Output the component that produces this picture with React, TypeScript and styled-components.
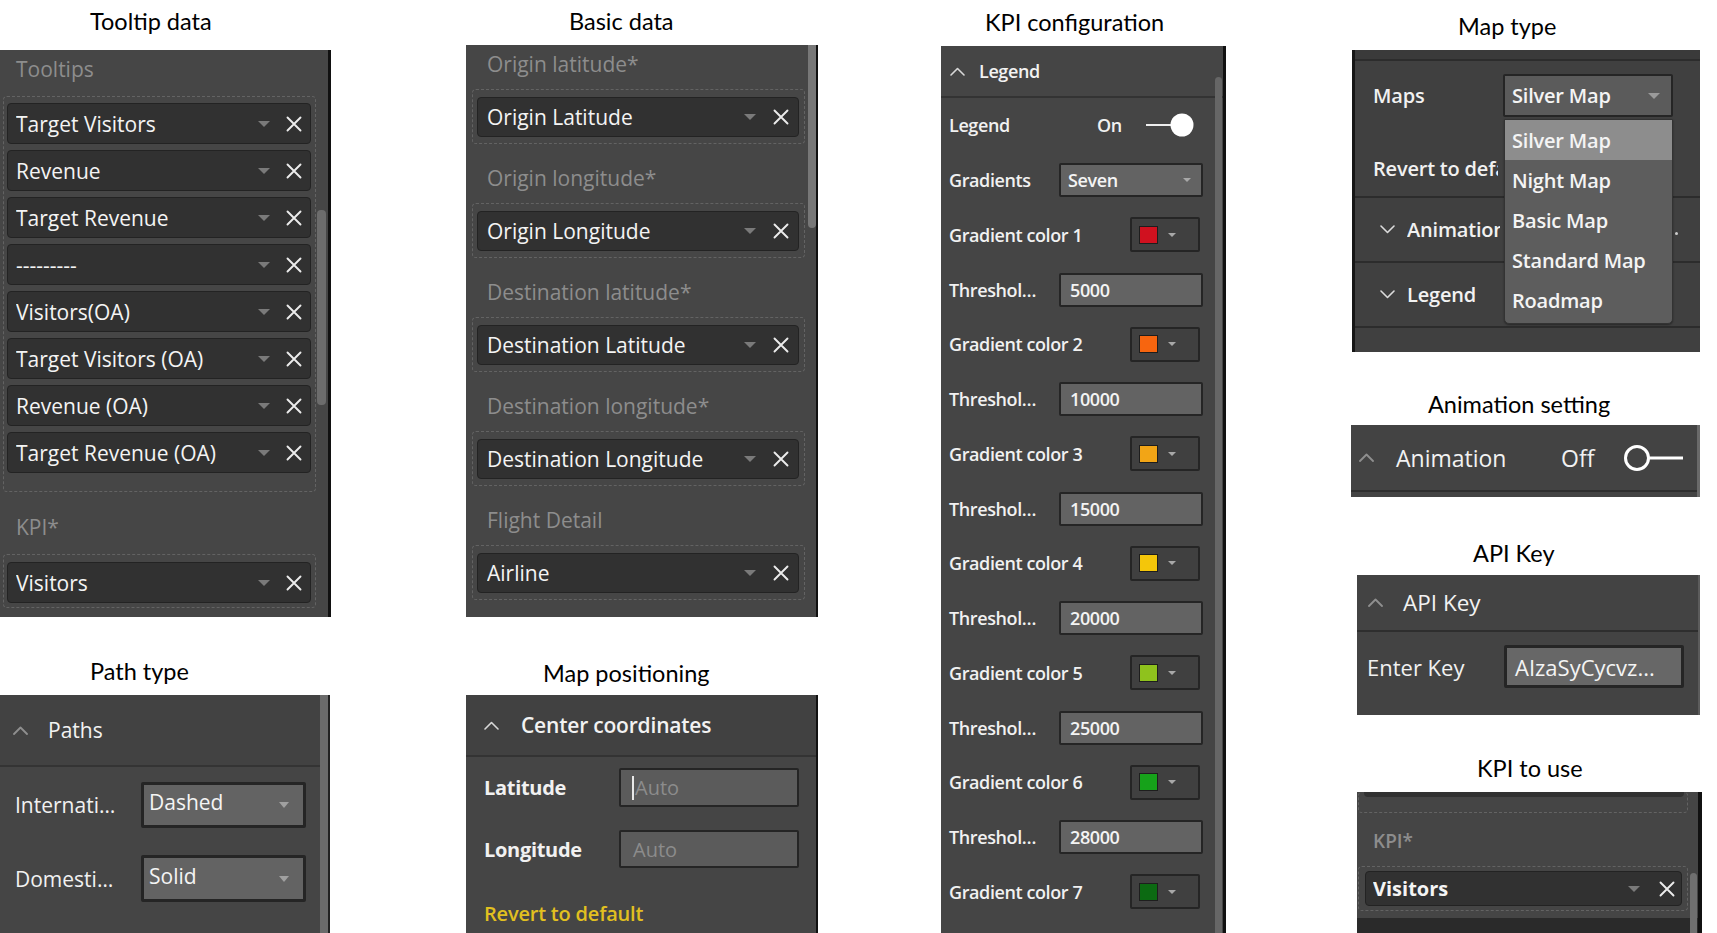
import React from "react";
import styled, { createGlobalStyle } from "styled-components";

const Global = createGlobalStyle`
  html, body { margin: 0; padding: 0; background: #fff; overflow: hidden; }
  body { font-family: "Open Sans", "Noto Sans", sans-serif; }
  * { box-sizing: border-box; }
`;

const Page = styled.div`
  display: flex;
  align-items: flex-start;
  width: 1717px;
  height: 933px;
  overflow: hidden;
  background: #fff;
`;

const Column = styled.div<{ $w: number; $ml: number }>`
  display: flex;
  flex-direction: column;
  flex: 0 0 ${(p) => p.$w}px;
  margin-left: ${(p) => p.$ml}px;
`;

const Figure = styled.section<{ $mt: number }>`
  display: flex;
  flex-direction: column;
  margin-top: ${(p) => p.$mt}px;
`;

const Caption = styled.div<{ $pl: number; $gap: number }>`
  font-family: Lato, "Liberation Sans", sans-serif;
  font-size: 23.5px;
  line-height: 28px;
  color: #000;
  padding-left: ${(p) => p.$pl}px;
  margin-bottom: ${(p) => p.$gap}px;
  white-space: nowrap;
`;

const Panel = styled.div<{
  $w: number;
  $h: number;
  $ml?: number;
  $bg?: string;
  $br?: string;
  $bl?: string;
}>`
  position: relative;
  overflow: hidden;
  display: flex;
  flex-direction: column;
  width: ${(p) => p.$w}px;
  height: ${(p) => p.$h}px;
  margin-left: ${(p) => p.$ml ?? 0}px;
  background: ${(p) => p.$bg ?? "#464646"};
  border-right: ${(p) => p.$br ?? "none"};
  border-left: ${(p) => p.$bl ?? "none"};
  color: #f0f0f0;
`;

const ScrollThumb = styled.div<{
  $left: number;
  $top: number;
  $h?: number;
  $w?: number;
  $c?: string;
  $radius?: string;
}>`
  position: absolute;
  left: ${(p) => p.$left}px;
  top: ${(p) => p.$top}px;
  width: ${(p) => p.$w ?? 8}px;
  ${(p) => (p.$h ? `height: ${p.$h}px;` : "bottom: 0;")}
  background: ${(p) => p.$c ?? "#6f6f6f"};
  border-radius: ${(p) => p.$radius ?? "4px"};
`;

/* ---------- field wells ---------- */

const FieldLabel = styled.div<{ $pl: number; $mt?: number; $fs?: number; $weight?: number }>`
  padding-left: ${(p) => p.$pl}px;
  margin-top: ${(p) => p.$mt ?? 0}px;
  font-size: ${(p) => p.$fs ?? 21}px;
  font-weight: ${(p) => p.$weight ?? 400};
  line-height: 28px;
  color: #8d8d8d;
  white-space: nowrap;
`;

const Well = styled.div<{
  $ml: number;
  $w: number;
  $mt: number;
  $pad: string;
  $gap?: number;
  $noTop?: boolean;
}>`
  display: flex;
  flex-direction: column;
  gap: ${(p) => p.$gap ?? 6}px;
  margin-left: ${(p) => p.$ml}px;
  margin-top: ${(p) => p.$mt}px;
  width: ${(p) => p.$w}px;
  padding: ${(p) => p.$pad};
  border: 1px dashed #636363;
  ${(p) => (p.$noTop ? "border-top: none;" : "")}
  border-radius: 4px;
`;

const Pill = styled.div<{ $h: number; $pl: number; $pr: number; $fs: number; $weight?: number; $gap: number }>`
  display: flex;
  align-items: center;
  height: ${(p) => p.$h}px;
  padding-left: ${(p) => p.$pl}px;
  padding-right: ${(p) => p.$pr}px;
  gap: ${(p) => p.$gap}px;
  background: #313131;
  border: 1px solid #232323;
  border-radius: 4px;
  color: #f4f4f4;
  font-size: ${(p) => p.$fs}px;
  font-weight: ${(p) => p.$weight ?? 400};
  white-space: nowrap;
`;

const PillText = styled.span`
  flex: 1;
  overflow: hidden;
`;

const PillStub = styled.div`
  width: 320px;
  height: 5px;
  background: #313131;
  border-radius: 0 0 4px 4px;
`;

const Caret = ({ w = 12, h = 6, c = "#7a7a7a" }: { w?: number; h?: number; c?: string }) => (
  <svg width={w} height={h} viewBox={`0 0 ${w} ${h}`} style={{ flex: "none" }}>
    <polygon points={`0,0 ${w},0 ${w / 2},${h}`} fill={c} />
  </svg>
);

const CloseX = ({ s = 16 }: { s?: number }) => (
  <svg width={s} height={s} viewBox="0 0 16 16" style={{ flex: "none" }}>
    <path d="M1.5 1.5 L14.5 14.5 M14.5 1.5 L1.5 14.5" stroke="#ececec" strokeWidth="1.9" strokeLinecap="round" />
  </svg>
);

const Chevron = ({ dir, c, sw = 1.6 }: { dir: "up" | "down"; c: string; sw?: number }) => (
  <svg width={15} height={9} viewBox="0 0 15 9" style={{ flex: "none" }}>
    <polyline
      points={dir === "up" ? "1,8 7.5,1.5 14,8" : "1,1 7.5,7.5 14,1"}
      fill="none"
      stroke={c}
      strokeWidth={sw}
      strokeLinejoin="round"
      strokeLinecap="round"
    />
  </svg>
);

const FieldPill = ({
  text,
  h,
  pl,
  pr,
  fs,
  gap,
  weight,
}: {
  text: string;
  h: number;
  pl: number;
  pr: number;
  fs: number;
  gap: number;
  weight?: number;
}) => (
  <Pill $h={h} $pl={pl} $pr={pr} $fs={fs} $gap={gap} $weight={weight}>
    <PillText>{text}</PillText>
    <Caret />
    <CloseX />
  </Pill>
);

/* ---------- format pane parts ---------- */

const SectionHeader = styled.div<{ $h: number; $pl: number; $gap: number; $line?: string; $bg?: string }>`
  display: flex;
  align-items: center;
  flex: none;
  height: ${(p) => p.$h}px;
  padding-left: ${(p) => p.$pl}px;
  gap: ${(p) => p.$gap}px;
  border-bottom: 2px solid ${(p) => p.$line ?? "#2f2f2f"};
  background: ${(p) => p.$bg ?? "transparent"};
`;

const HeaderText = styled.span<{ $fs: number; $weight?: number; $w?: number }>`
  font-size: ${(p) => p.$fs}px;
  font-weight: ${(p) => p.$weight ?? 400};
  color: #f2f2f2;
  white-space: nowrap;
  ${(p) => (p.$w ? `flex: 0 0 ${p.$w}px;` : "")}
`;

const FormRow = styled.div<{ $h: number; $mt?: number; $pl: number }>`
  display: flex;
  align-items: center;
  flex: none;
  height: ${(p) => p.$h}px;
  margin-top: ${(p) => p.$mt ?? 0}px;
  padding-left: ${(p) => p.$pl}px;
`;

const FormLabel = styled.span<{ $w: number; $fs: number; $weight?: number; $ls?: number }>`
  flex: 0 0 ${(p) => p.$w}px;
  font-size: ${(p) => p.$fs}px;
  font-weight: ${(p) => p.$weight ?? 400};
  letter-spacing: ${(p) => p.$ls ?? 0}px;
  color: #f1f1f1;
  white-space: nowrap;
`;

const Box = styled.div<{
  $w: number;
  $h: number;
  $bw: number;
  $bg: string;
  $pl: number;
  $pr?: number;
  $fs: number;
  $weight?: number;
  $ml?: number;
  $color?: string;
}>`
  display: flex;
  align-items: center;
  flex: none;
  width: ${(p) => p.$w}px;
  height: ${(p) => p.$h}px;
  margin-left: ${(p) => p.$ml ?? 0}px;
  padding-left: ${(p) => p.$pl}px;
  padding-right: ${(p) => p.$pr ?? 0}px;
  background: ${(p) => p.$bg};
  border: ${(p) => p.$bw}px solid #252525;
  border-radius: 2px;
  font-size: ${(p) => p.$fs}px;
  font-weight: ${(p) => p.$weight ?? 400};
  color: ${(p) => p.$color ?? "#f4f4f4"};
  white-space: nowrap;
`;

const BoxText = styled.span`
  flex: 1;
`;

/* ---------- Panel 1: Tooltip data ---------- */

const tooltipFields = [
  "Target Visitors",
  "Revenue",
  "Target Revenue",
  "---------",
  "Visitors(OA)",
  "Target Visitors (OA)",
  "Revenue (OA)",
  "Target Revenue (OA)",
];

const TooltipPanel = () => (
  <Panel $w={331} $h={567} $br="3px solid #111">
    <FieldLabel $pl={16} $mt={5}>Tooltips</FieldLabel>
    <Well $ml={3} $w={313} $mt={13} $pad="6px 4px 18px 3px">
      {tooltipFields.map((f) => (
        <FieldPill key={f} text={f} h={41} pl={8} pr={8} fs={21} gap={16} />
      ))}
    </Well>
    <FieldLabel $pl={16} $mt={21}>KPI*</FieldLabel>
    <Well $ml={3} $w={313} $mt={13} $pad="7px 4px 4px 3px">
      <FieldPill text="Visitors" h={41} pl={8} pr={8} fs={21} gap={16} />
    </Well>
    <ScrollThumb $left={317} $top={160} $h={195} $w={9} $c="#6c6c6c" />
  </Panel>
);

/* ---------- Panel 2: Basic data ---------- */

const basicSections = [
  ["Origin latitude*", "Origin Latitude"],
  ["Origin longitude*", "Origin Longitude"],
  ["Destination latitude*", "Destination Latitude"],
  ["Destination longitude*", "Destination Longitude"],
  ["Flight Detail", "Airline"],
];

const Section = styled.div<{ $mb: number; $mt?: number }>`
  display: flex;
  flex-direction: column;
  margin-top: ${(p) => p.$mt ?? 0}px;
  margin-bottom: ${(p) => p.$mb}px;
`;

const BasicPanel = () => (
  <Panel $w={352} $h={572} $br="2px solid #111">
    {basicSections.map(([label, value], i) => (
      <Section key={label} $mt={i === 0 ? 5 : 0} $mb={i < basicSections.length - 1 ? 20 : 0}>
        <FieldLabel $pl={21}>{label}</FieldLabel>
        <Well $ml={6} $w={333} $mt={11} $pad="7px 5px 6px 4px">
          <FieldPill text={value} h={40} pl={9} pr={9} fs={21} gap={17} />
        </Well>
      </Section>
    ))}
    <ScrollThumb $left={342} $top={0} $h={183} $w={8} $c="#777" $radius="0 0 4px 4px" />
  </Panel>
);

/* ---------- Panel 3: KPI configuration ---------- */

type KpiRow =
  | { kind: "toggle"; label: string }
  | { kind: "select"; label: string; value: string }
  | { kind: "color"; label: string; color: string }
  | { kind: "input"; label: string; value: string };

const kpiRows: KpiRow[] = [
  { kind: "toggle", label: "Legend" },
  { kind: "select", label: "Gradients", value: "Seven" },
  { kind: "color", label: "Gradient color 1", color: "#d0111f" },
  { kind: "input", label: "Threshol…", value: "5000" },
  { kind: "color", label: "Gradient color 2", color: "#f7650f" },
  { kind: "input", label: "Threshol…", value: "10000" },
  { kind: "color", label: "Gradient color 3", color: "#f2a516" },
  { kind: "input", label: "Threshol…", value: "15000" },
  { kind: "color", label: "Gradient color 4", color: "#f4c60a" },
  { kind: "input", label: "Threshol…", value: "20000" },
  { kind: "color", label: "Gradient color 5", color: "#8fc21d" },
  { kind: "input", label: "Threshol…", value: "25000" },
  { kind: "color", label: "Gradient color 6", color: "#16a21a" },
  { kind: "input", label: "Threshol…", value: "28000" },
  { kind: "color", label: "Gradient color 7", color: "#0c6a12" },
];

const labelWidth: Record<KpiRow["kind"], number> = {
  toggle: 148,
  select: 110,
  input: 110,
  color: 181,
};

const Swatch = styled.span<{ $c: string }>`
  flex: none;
  width: 19px;
  height: 18px;
  background: ${(p) => p.$c};
  border: 1px solid #1e1e1e;
  margin-right: 10px;
`;

const OnText = styled.span`
  font-size: 18px;
  font-weight: 600;
  letter-spacing: -0.3px;
  color: #f1f1f1;
`;

const KpiRowView = ({ row }: { row: KpiRow }) => (
  <FormRow $h={54.75} $pl={8}>
    <FormLabel $w={labelWidth[row.kind]} $fs={18} $weight={600} $ls={-0.4}>
      {row.label}
    </FormLabel>
    {row.kind === "toggle" && (
      <>
        <OnText>On</OnText>
        <svg width={48} height={24} viewBox="0 0 48 24" style={{ marginLeft: 24 }}>
          <line x1="0" y1="12" x2="28" y2="12" stroke="#eee" strokeWidth="2" />
          <circle cx="36" cy="12" r="11.5" fill="#fff" />
        </svg>
      </>
    )}
    {row.kind === "select" && (
      <Box $w={144} $h={34} $bw={2} $bg="#636363" $pl={7} $pr={10} $fs={18} $weight={600}>
        <BoxText style={{ letterSpacing: -0.4 }}>{row.value}</BoxText>
        <Caret w={8} h={4} c="#a8a8a8" />
      </Box>
    )}
    {row.kind === "input" && (
      <Box $w={144} $h={34} $bw={2} $bg="#636363" $pl={9} $fs={18} $weight={600}>
        <BoxText style={{ letterSpacing: -0.4 }}>{row.value}</BoxText>
      </Box>
    )}
    {row.kind === "color" && (
      <Box $w={70} $h={35} $bw={2} $bg="#404040" $pl={7} $fs={18}>
        <Swatch $c={row.color} />
        <Caret w={8} h={4} c="#a8a8a8" />
      </Box>
    )}
  </FormRow>
);

const KpiPanel = () => (
  <Panel $w={285} $h={887} $bg="#454545" $br="3px solid #111">
    <SectionHeader $h={52} $pl={9} $gap={14} $line="#333">
      <Chevron dir="up" c="#d8d8d8" />
      <HeaderText $fs={18} $weight={600} style={{ letterSpacing: -0.4 }}>
        Legend
      </HeaderText>
    </SectionHeader>
    {kpiRows.map((r, i) => (
      <KpiRowView key={i} row={r} />
    ))}
    <ScrollThumb $left={274} $top={31} $w={7} $c="#666" $radius="4px 4px 0 0" />
  </Panel>
);

/* ---------- Panel 4: Map type ---------- */

const TopStrip = styled.div`
  flex: none;
  height: 11px;
  background: #3a3a3a;
  border-bottom: 2px solid #2c2c2c;
`;

const SelectWrap = styled.div`
  position: relative;
  flex: none;
`;

const Menu = styled.ul`
  position: absolute;
  z-index: 2;
  left: 1px;
  top: 45px;
  width: 169px;
  margin: 0;
  padding: 0 0 3px;
  list-style: none;
  background: #5d5d5d;
  border: 1px solid #333;
  border-radius: 0 0 5px 5px;
  box-shadow: 0 1px 2px rgba(0, 0, 0, 0.4);
`;

const MenuItem = styled.li<{ $active?: boolean }>`
  height: 40px;
  display: flex;
  align-items: center;
  padding-left: 7px;
  font-size: 20px;
  font-weight: 600;
  letter-spacing: -0.2px;
  color: #f4f4f4;
  background: ${(p) => (p.$active ? "#8d8d8d" : "transparent")};
  white-space: nowrap;
`;

const Dot = styled.span`
  width: 3px;
  height: 3px;
  border-radius: 50%;
  background: #ccc;
  margin-left: auto;
  margin-right: 22px;
  margin-top: 8px;
`;

const RevertRow = styled.div`
  flex: none;
  height: 81px;
  padding: 38px 0 0 18px;
  border-bottom: 2px solid #2c2c2c;
`;

const ClippedText = styled.div<{ $w: number }>`
  width: ${(p) => p.$w}px;
  overflow: hidden;
  font-size: 20px;
  font-weight: 600;
  line-height: 28px;
  letter-spacing: -0.2px;
  color: #f1f1f1;
  white-space: nowrap;
`;

const MapTypePanel = () => (
  <Panel $w={348} $h={302} $ml={1} $bg="#404040" $bl="3px solid #161616">
    <TopStrip />
    <FormRow $h={43} $mt={13} $pl={18}>
      <FormLabel $w={130} $fs={20} $weight={600} $ls={-0.2}>
        Maps
      </FormLabel>
      <SelectWrap>
        <Box $w={170} $h={43} $bw={2} $bg="#5b5b5b" $pl={7} $pr={11} $fs={20} $weight={600}>
          <BoxText style={{ letterSpacing: -0.2 }}>Silver Map</BoxText>
          <Caret w={12} h={6} c="#9a9a9a" />
        </Box>
        <Menu>
          <MenuItem $active>Silver Map</MenuItem>
          <MenuItem>Night Map</MenuItem>
          <MenuItem>Basic Map</MenuItem>
          <MenuItem>Standard Map</MenuItem>
          <MenuItem>Roadmap</MenuItem>
        </Menu>
      </SelectWrap>
    </FormRow>
    <RevertRow>
      <ClippedText $w={125}>Revert to default</ClippedText>
    </RevertRow>
    <SectionHeader $h={65} $pl={25} $gap={12} $line="#2c2c2c">
      <Chevron dir="down" c="#dcdcdc" />
      <ClippedText $w={93}>Animation</ClippedText>
      <Dot />
    </SectionHeader>
    <SectionHeader $h={65} $pl={25} $gap={12} $line="#2c2c2c">
      <Chevron dir="down" c="#dcdcdc" />
      <HeaderText $fs={20} $weight={600} style={{ letterSpacing: -0.2 }}>
        Legend
      </HeaderText>
    </SectionHeader>
  </Panel>
);

/* ---------- Panel 5: Animation ---------- */

const OffText = styled.span`
  flex: 0 0 37px;
  font-size: 23px;
  color: #f1f1f1;
`;

const AnimationPanel = () => (
  <Panel $w={349} $h={72} $bg="#434343" $br="3px solid #6a6a6a">
    <SectionHeader $h={67} $pl={8} $gap={22} $line="#2e2e2e">
      <Chevron dir="up" c="#8f8f8f" sw={1.8} />
      <HeaderText $fs={23} $w={143}>
        Animation
      </HeaderText>
      <OffText>Off</OffText>
      <svg width={62} height={28} viewBox="0 0 62 28" style={{ marginLeft: 3 }}>
        <circle cx="14" cy="14" r="11.5" fill="#434343" stroke="#fff" strokeWidth="3" />
        <line x1="25.5" y1="14" x2="60" y2="14" stroke="#fff" strokeWidth="3" />
      </svg>
    </SectionHeader>
  </Panel>
);

/* ---------- Panel 6: API Key ---------- */

const ApiPanel = () => (
  <Panel $w={343} $h={140} $ml={6} $bg="#434343" $br="2px solid #5c5c5c">
    <SectionHeader $h={57} $pl={11} $gap={20} $line="#2e2e2e">
      <Chevron dir="up" c="#8f8f8f" sw={1.8} />
      <HeaderText $fs={22.5}>API Key</HeaderText>
    </SectionHeader>
    <FormRow $h={43} $mt={13} $pl={10}>
      <FormLabel $w={137} $fs={22}>
        Enter Key
      </FormLabel>
      <Box $w={180} $h={43} $bw={3} $bg="#676767" $pl={8} $fs={22}>
        <BoxText>AIzaSyCycvz...</BoxText>
      </Box>
    </FormRow>
  </Panel>
);

/* ---------- Panel 7: KPI to use ---------- */

const DarkBand = styled.div`
  flex: none;
  margin-top: 7px;
  height: 20px;
  background: #2a2a2a;
`;

const KpiUsePanel = () => (
  <Panel $w={345} $h={141} $ml={6} $bg="#454545" $br="4px solid #111">
    <Well $ml={1} $w={330} $mt={0} $pad="0 5px 15px 5px" $noTop>
      <PillStub />
    </Well>
    <FieldLabel $pl={16} $mt={14} $fs={19} $weight={600}>
      KPI*
    </FieldLabel>
    <Well $ml={1} $w={330} $mt={11} $pad="4px 5px 4px 6px">
      <FieldPill text="Visitors" h={35} pl={7} pr={6} fs={20} gap={19} weight={700} />
    </Well>
    <DarkBand />
    <ScrollThumb $left={333} $top={81} $w={7} $c="#6f6f6f" $radius="4px 4px 0 0" />
  </Panel>
);

/* ---------- Panel 8: Path type ---------- */

const PathPanel = () => (
  <Panel $w={330} $h={238} $bg="#454545" $br="2px solid #222">
    <SectionHeader $h={72} $pl={13} $gap={20} $line="#343434" $bg="#424242">
      <Chevron dir="up" c="#8f8f8f" sw={1.8} />
      <HeaderText $fs={21}>Paths</HeaderText>
    </SectionHeader>
    <FormRow $h={46} $mt={15} $pl={15}>
      <FormLabel $w={126} $fs={21}>
        Internati…
      </FormLabel>
      <Box $w={165} $h={46} $bw={3} $bg="#636363" $pl={5} $pr={14} $fs={21}>
        <BoxText style={{ marginTop: -6 }}>Dashed</BoxText>
        <Caret w={10} h={6} c="#a0a0a0" />
      </Box>
    </FormRow>
    <FormRow $h={47} $mt={27} $pl={15}>
      <FormLabel $w={126} $fs={21}>
        Domesti…
      </FormLabel>
      <Box $w={165} $h={47} $bw={3} $bg="#636363" $pl={5} $pr={14} $fs={21}>
        <BoxText style={{ marginTop: -6 }}>Solid</BoxText>
        <Caret w={10} h={6} c="#a0a0a0" />
      </Box>
    </FormRow>
    <ScrollThumb $left={320} $top={0} $w={8} $c="#6b6b6b" $radius="0" />
  </Panel>
);

/* ---------- Panel 9: Map positioning ---------- */

const TextCaret = styled.span`
  width: 2px;
  height: 24px;
  background: #e8e8e8;
  margin-right: 1px;
`;

const RevertLink = styled.div`
  margin-top: 32px;
  padding-left: 18px;
  font-size: 20px;
  font-weight: 600;
  line-height: 28px;
  letter-spacing: -0.2px;
  color: #e2c020;
`;

const PositionPanel = () => (
  <Panel $w={352} $h={238} $bg="#454545" $br="2px solid #111">
    <SectionHeader $h={62} $pl={18} $gap={22} $line="#333" $bg="#414141">
      <Chevron dir="up" c="#d8d8d8" />
      <HeaderText $fs={21} $weight={600} style={{ letterSpacing: -0.2 }}>
        Center coordinates
      </HeaderText>
    </SectionHeader>
    <FormRow $h={39} $mt={11} $pl={18}>
      <FormLabel $w={135} $fs={20} $weight={700} $ls={-0.3}>
        Latitude
      </FormLabel>
      <Box $w={180} $h={39} $bw={2} $bg="#5b5b5b" $pl={11} $fs={20} $color="#8c8c8c">
        <TextCaret />
        <BoxText>Auto</BoxText>
      </Box>
    </FormRow>
    <FormRow $h={38} $mt={23} $pl={18}>
      <FormLabel $w={135} $fs={20} $weight={700} $ls={-0.3}>
        Longitude
      </FormLabel>
      <Box $w={180} $h={38} $bw={2} $bg="#5b5b5b" $pl={12} $fs={20} $color="#8c8c8c">
        <BoxText>Auto</BoxText>
      </Box>
    </FormRow>
    <RevertLink>Revert to default</RevertLink>
  </Panel>
);

/* ---------- App ---------- */

export default function App() {
  return (
    <>
      <Global />
      <Page>
        <Column $w={331} $ml={0}>
          <Figure $mt={7}>
            <Caption $pl={90} $gap={15}>Tooltip data</Caption>
            <TooltipPanel />
          </Figure>
          <Figure $mt={40}>
            <Caption $pl={90} $gap={10}>Path type</Caption>
            <PathPanel />
          </Figure>
        </Column>
        <Column $w={352} $ml={135}>
          <Figure $mt={7}>
            <Caption $pl={103} $gap={10}>Basic data</Caption>
            <BasicPanel />
          </Figure>
          <Figure $mt={42}>
            <Caption $pl={77} $gap={8}>Map positioning</Caption>
            <PositionPanel />
          </Figure>
        </Column>
        <Column $w={285} $ml={123}>
          <Figure $mt={8}>
            <Caption $pl={44} $gap={10}>KPI configuration</Caption>
            <KpiPanel />
          </Figure>
        </Column>
        <Column $w={351} $ml={125}>
          <Figure $mt={12}>
            <Caption $pl={107} $gap={10}>Map type</Caption>
            <MapTypePanel />
          </Figure>
          <Figure $mt={38}>
            <Caption $pl={77} $gap={7}>Animation setting</Caption>
            <AnimationPanel />
          </Figure>
          <Figure $mt={42}>
            <Caption $pl={122} $gap={8}>API Key</Caption>
            <ApiPanel />
          </Figure>
          <Figure $mt={39}>
            <Caption $pl={126} $gap={10}>KPI to use</Caption>
            <KpiUsePanel />
          </Figure>
        </Column>
      </Page>
    </>
  );
}
